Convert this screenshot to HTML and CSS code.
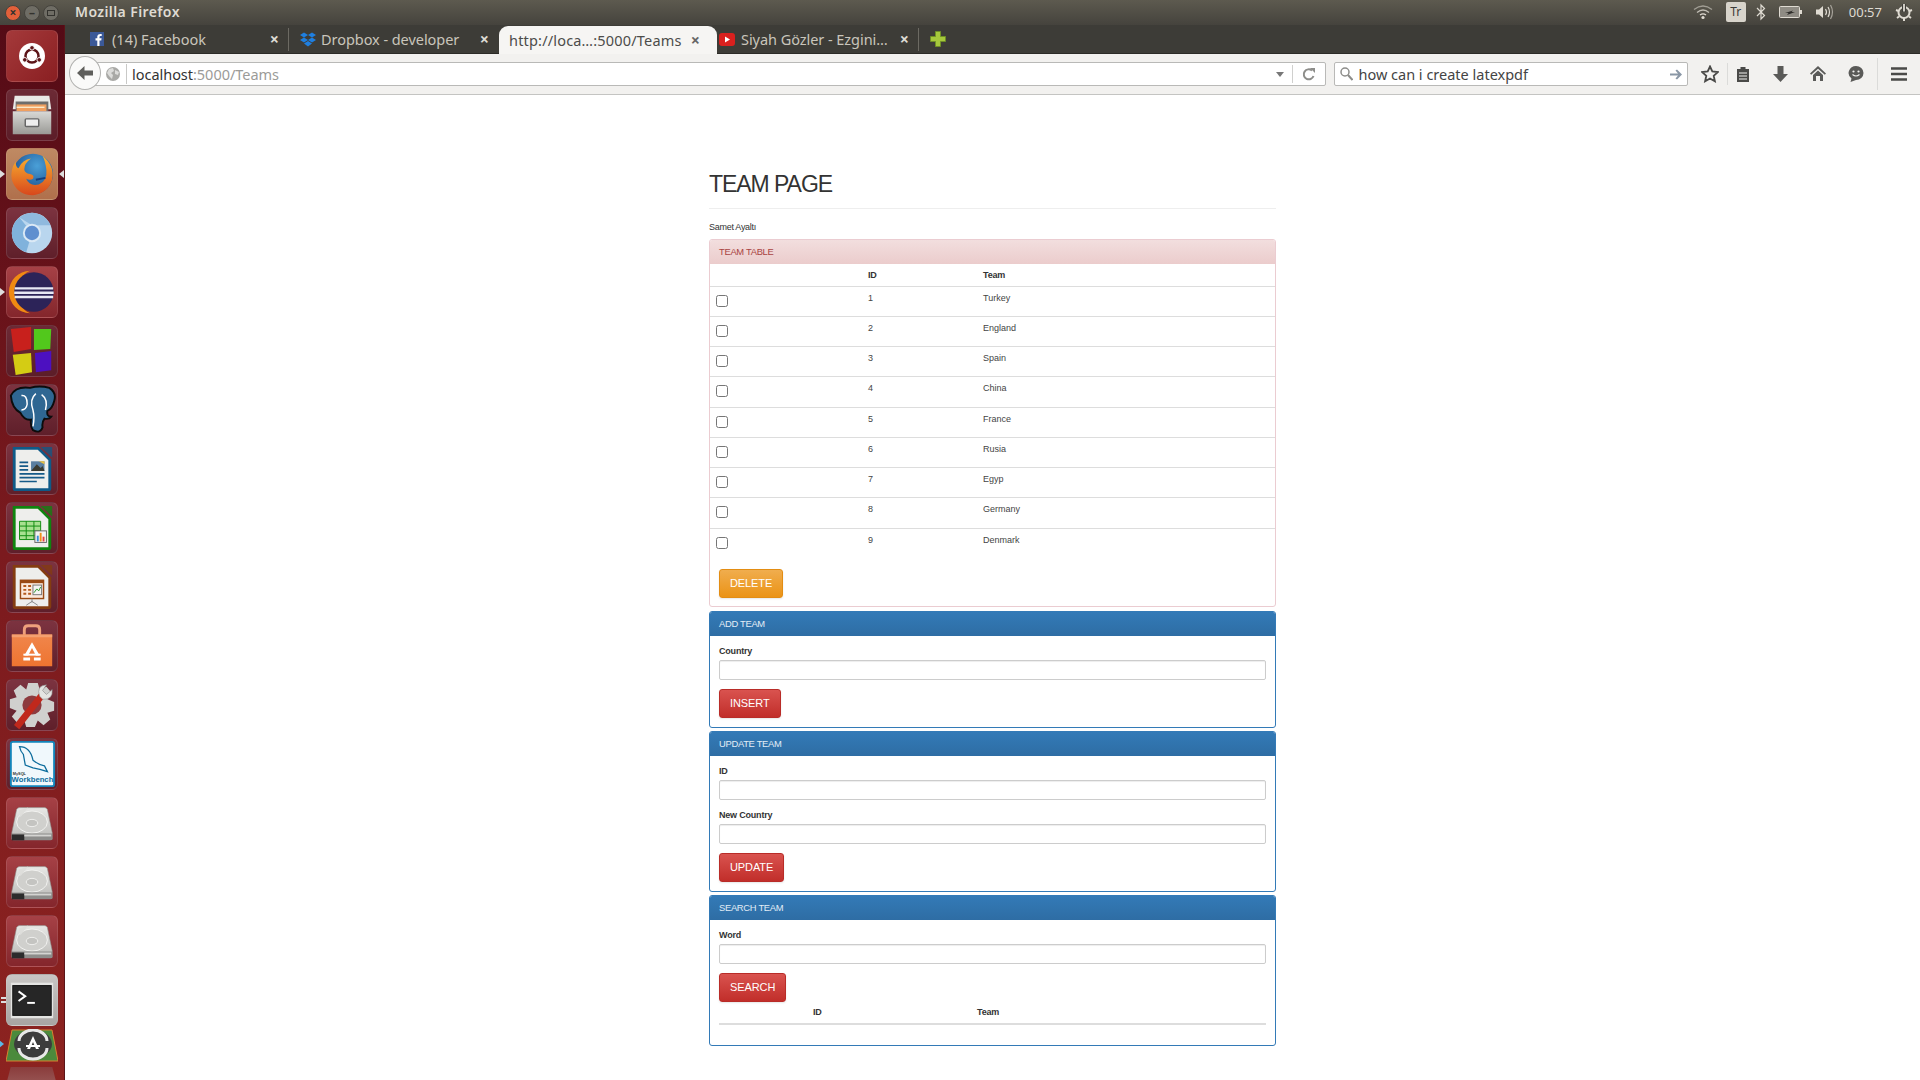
FILE: index.html
```html
<!DOCTYPE html>
<html lang="en">
<head>
<meta charset="utf-8">
<title>Team Page</title>
<link rel="stylesheet" href="styles.css">
</head>
<body>
<svg class="defs" width="0" height="0" aria-hidden="true">
  <defs>
    <linearGradient id="hddTop" x1="0" y1="0" x2="0" y2="1"><stop offset="0" stop-color="#e8e8e6"/><stop offset="1" stop-color="#bcbcb9"/></linearGradient>
    <linearGradient id="cabFront" x1="0" y1="0" x2="0" y2="1"><stop offset="0" stop-color="#d9d9d6"/><stop offset="1" stop-color="#9a9a96"/></linearGradient>
    <linearGradient id="bagG" x1="0" y1="0" x2="0" y2="1"><stop offset="0" stop-color="#f0864c"/><stop offset="1" stop-color="#ee7430"/></linearGradient>
    <radialGradient id="ffBlue" cx=".6" cy=".3" r=".8"><stop offset="0" stop-color="#4aa0d8"/><stop offset="1" stop-color="#123f80"/></radialGradient>
    <linearGradient id="ffOr" x1="0" y1="0" x2="0" y2="1"><stop offset="0" stop-color="#f8b030"/><stop offset="1" stop-color="#d8481c"/></linearGradient>
    <symbol id="hdd" viewBox="0 0 52 52">
      <path d="M13 10H39Q41 10 42 12L47 36V43H5V36L10 12Q11 10 13 10Z" fill="url(#hddTop)" stroke="#8c8c88" stroke-width=".6"/>
      <ellipse cx="26" cy="25" rx="16" ry="11.500" fill="#d0d0cd" stroke="#f2f2f0" stroke-width="1"/>
      <ellipse cx="26" cy="26" rx="6" ry="3.800" fill="#c4c4c1" stroke="#efefed" stroke-width="1"/>
      <path d="M12 13L22 10L14 20Z" fill="#dededb"/>
      <path d="M5 37H47V43Q47 44 45 44H7Q5 44 5 43Z" fill="#8d8d8b"/>
      <path d="M5 38H18V44H5Z" fill="#2c2c2c"/>
      <path d="M18 38H46V40H18Z" fill="#d4d4d1"/>
    </symbol>
    <symbol id="lodoc" viewBox="0 0 52 52">
      <path d="M6 3H33L46 16V46Q46 49 43 49H9Q6 49 6 46Z" fill="currentColor"/>
      <path d="M9 6H32L43 17V46H9Z" fill="#eeeeec"/>
      <path d="M35 3L46 3Q47 3 47 4V14Z" fill="currentColor" opacity=".75"/>
    </symbol>
  </defs>
</svg>

<div class="screen">
  <header class="top-panel">
    <div class="win-btns">
      <span class="win-btn win-close">×</span>
      <span class="win-btn">–</span>
      <span class="win-btn"><i class="win-max"></i></span>
    </div>
    <span class="win-title">Mozilla Firefox</span>
    <div class="indicators">
      <svg class="ind-wifi" width="20" height="16" viewBox="0 0 20 16"><g fill="none" stroke="#dfdbd2" stroke-width="1.300"><path d="M1 5.500Q10 -1.500 19 5.500" opacity=".55"/><path d="M4 8.500Q10 3.500 16 8.500" opacity=".8"/><path d="M7 11Q10 8.600 13 11"/></g><circle cx="10" cy="13.500" r="1.600" fill="#dfdbd2"/></svg>
      <span class="ind-tr">Tr</span>
      <svg class="ind-bt" width="10" height="18" viewBox="0 0 10 18"><path d="M1 5L8.500 12.500L5 16V2L8.500 5.500L1 13" fill="none" stroke="#dfdbd2" stroke-width="1.200"/></svg>
      <svg class="ind-bat" width="24" height="14" viewBox="0 0 24 14"><rect x=".5" y="1.500" width="20" height="11" rx="1" fill="#8f8c84" stroke="#dfdbd2"/><rect x="21" y="5" width="2" height="4" fill="#dfdbd2"/><path d="M6 8L14 5.500L12.500 7H16L8 10L9.500 8Z" fill="#2e2d2a"/></svg>
      <svg class="ind-vol" width="20" height="18" viewBox="0 0 20 18"><path d="M1 6.500H4L8 3V15L4 11.500H1Z" fill="#dfdbd2"/><g fill="none" stroke="#dfdbd2" stroke-width="1.200"><path d="M10.500 6Q12.500 9 10.500 12"/><path d="M13 4Q16 9 13 14"/><path d="M15.500 2Q19.500 9 15.500 16" opacity=".6"/></g></svg>
      <span class="ind-time">00:57</span>
      <svg class="ind-gear" width="18" height="18" viewBox="0 0 18 18"><circle cx="9" cy="9.500" r="5.500" fill="none" stroke="#dfdbd2" stroke-width="2"/><path d="M9 1V9" stroke="#3f3e39" stroke-width="4"/><path d="M9 1V8.500" stroke="#dfdbd2" stroke-width="1.800"/><path d="M9 15V18M2 15L4 13.500M16 15L14 13.500M1 7L3.500 8M17 7L14.500 8" stroke="#dfdbd2" stroke-width="2"/></svg>
    </div>
  </header>

  <div class="desktop">
    <nav class="launcher">
      <div class="tile t-dash"><svg viewBox="0 0 52 52"><circle cx="26" cy="26" r="13.500" fill="#fff"/><circle cx="26" cy="26" r="6.800" fill="none" stroke="#5c1418" stroke-width="2.600"/><circle cx="26" cy="17.500" r="2.400" fill="#5c1418" stroke="#fff"/><circle cx="18.500" cy="30" r="2.400" fill="#5c1418" stroke="#fff"/><circle cx="33.500" cy="30" r="2.400" fill="#5c1418" stroke="#fff"/></svg></div>
      <div class="tile t-plain"><svg viewBox="0 0 52 52"><path d="M8 6H44L46 20H6Z" fill="#e9e9e6"/><path d="M9 12H43V22H9Z" fill="#6e6e6c"/><path d="M10 15H41V22H10Z" fill="#f0a060"/><path d="M10 18H39" stroke="#fbe9c8" stroke-width="1.500"/><path d="M6 22H46V46H6Z" fill="url(#cabFront)"/><rect x="19" y="30" width="14" height="8" rx="1" fill="#eee" stroke="#666" stroke-width="1.500"/></svg></div>
      <div class="tile t-tan pipped-both"><svg viewBox="0 0 52 52"><circle cx="27" cy="26" r="21" fill="url(#ffBlue)"/><path d="M37 7Q50 18 47 32Q43 46 27 48Q10 48 5 32Q3 22 9 13Q9 19 12 20Q16 11 25 10Q18 15 18 21Q18 25 24 26Q29 27 27 31Q24 33 20 31Q23 39 33 37Q42 33 41 22Q40 13 37 7Z" fill="url(#ffOr)"/><path d="M30 32L40 30" stroke="#143f80" stroke-width="2"/></svg></div>
      <div class="tile t-plum"><svg viewBox="0 0 52 52"><circle cx="26" cy="26" r="21" fill="#b9d6ee"/><path d="M26 5A21 21 0 0 1 45 18H26L13 10A21 21 0 0 1 26 5Z" fill="#8fb9de"/><path d="M5 26A21 21 0 0 1 13 10L26 26L20 46A21 21 0 0 1 5 26Z" fill="#80b2dc"/><circle cx="26" cy="26" r="9.500" fill="#dbe9f5"/><circle cx="26" cy="26" r="7.500" fill="#5f8fcf"/></svg></div>
      <div class="tile t-rose pipped-left"><svg viewBox="0 0 52 52"><path d="M24 4A22 22 0 1 0 24 48A24 24 0 0 1 24 4Z" fill="#f08a12"/><circle cx="28" cy="26" r="20.500" fill="#2c2358"/><path d="M8 21H48V23.500H8ZM7.500 25.500H48.500V28H7.500ZM8 30H48V32.500H8Z" fill="#e8e8f4"/></svg></div>
      <div class="tile t-plain"><svg viewBox="0 0 52 52"><path d="M4 3L25 1V24L7 27Z" fill="#c8201c"/><path d="M28 3L46 3L45 24L28 25Z" fill="#52c81c"/><path d="M6 30L25 28L26 48L9 51Z" fill="#d4cc14"/><path d="M29 28L46 26V46L30 48Z" fill="#4c10c0"/></svg></div>
      <div class="tile t-plum"><svg viewBox="0 0 52 52"><path d="M4 11Q9 1 24 3Q34 0 44 3Q52 8 49 17Q47 25 42 27Q41 33 46 33Q44 36 39 35Q36 39 37 44Q35 51 27 47Q24 43 25 36Q18 37 14 29Q5 24 4 11Z" fill="#2f6792" stroke="#0c0c0c" stroke-width="2"/><path d="M15 11Q21 10 21 20Q20 26 15 26M30 9Q23 15 27 26Q29 34 27 43M36 10Q43 15 40 26" fill="none" stroke="#fff" stroke-width="1.500"/></svg></div>
      <div class="tile t-plum"><svg viewBox="0 0 52 52" class="lo-writer"><use href="#lodoc"/><path d="M13 19H22M13 23H22M13 27H22M13 31H39M13 35H39M13 39H31" stroke="#155a88" stroke-width="1.800"/><rect x="25" y="18" width="14" height="10" fill="#5a7ea0"/><path d="M25 28L31 21L35 25L37 23L39 28Z" fill="#3a3a30"/><path d="M33 18H39V21Z" fill="#e8c040"/></svg></div>
      <div class="tile t-plum"><svg viewBox="0 0 52 52" class="lo-calc"><use href="#lodoc"/><path d="M13 19H35V38H13Z" fill="#a8e090" stroke="#0f8a0f"/><path d="M13 24H35M13 29H35M13 34H35M20 19V38M28 19V38" stroke="#0f8a0f" stroke-width="1"/><rect x="29" y="29" width="12" height="12" fill="#f4f4f2" stroke="#666"/><path d="M31 40V34H33V40Z" fill="#3a90d8"/><path d="M34 40V31H36V40Z" fill="#f0901c"/><path d="M37 40V35H39V40Z" fill="#e84040"/></svg></div>
      <div class="tile t-plum"><svg viewBox="0 0 52 52" class="lo-impress"><use href="#lodoc"/><rect x="14" y="19" width="24" height="19" fill="#fbe9dc" stroke="#9a4a14" stroke-width="1.500"/><path d="M14 19H38V22H14Z" fill="#9a4a14"/><path d="M17 25H20M22 25H25M17 29H20M22 29H25M17 33H20M22 33H25" stroke="#b45a1c" stroke-width="2"/><rect x="27" y="24" width="9" height="10" fill="#f4f4f2" stroke="#777"/><path d="M28 32L31 28L33 30L35 26" stroke="#2a9a2a" fill="none"/><path d="M26 38V42M26 41L20 45M26 41L32 45" stroke="#888" stroke-width="1"/></svg></div>
      <div class="tile t-plum"><svg viewBox="0 0 52 52"><path d="M18 16V9Q18 5 22 5H30Q34 5 34 9V16" fill="none" stroke="#eea07c" stroke-width="3"/><path d="M5 14H47V47H5Z" fill="url(#bagG)"/><path d="M5 14H47V17H5Z" fill="#f4a070"/><path d="M26 22L18 36H22L26 28L30 36H34Z" fill="#fff"/><path d="M17 34H35V36H17Z" fill="#fff"/><path d="M17 38H24V41H17ZM28 38H35V41H28Z" fill="#fff"/></svg></div>
      <div class="tile t-plum"><svg viewBox="0 0 52 52"><path d="M22 3H32L34 10L41 7L47 14L42 20L49 23V32L42 34L45 41L38 47L32 42L29 49H20L18 42L11 45L5 38L10 32L3 29V20L10 18L7 11L14 5L20 10Z" fill="#d0d0ce"/><circle cx="26" cy="26" r="10" fill="#8d3a3e"/><path d="M10 49L37 15" stroke="#c0281c" stroke-width="7"/><path d="M34 17Q30 6 41 5L37 11L41 15L47 10Q48 21 37 20Z" fill="#e4e4e2" stroke="#888" stroke-width=".6"/></svg></div>
      <div class="tile t-plum"><svg viewBox="0 0 52 52"><rect x="4" y="3" width="45" height="46" rx="2" fill="#f0f8fc" stroke="#1284ba" stroke-width="2"/><path d="M13 8Q24 8 27 22Q33 27 39 28L42 34Q34 31 27 30L19 27L17 16Q14 13 13 8Z" fill="none" stroke="#0c6c9c" stroke-width="1.300"/><text x="6" y="37" class="wb-small">MySQL</text><text x="26.500" y="45" class="wb-big" text-anchor="middle">Workbench</text></svg></div>
      <div class="tile t-rose"><svg viewBox="0 0 52 52"><use href="#hdd"/></svg></div>
      <div class="tile t-rose"><svg viewBox="0 0 52 52"><use href="#hdd"/></svg></div>
      <div class="tile t-rose"><svg viewBox="0 0 52 52"><use href="#hdd"/></svg></div>
      <div class="tile t-term pipped-double"><svg viewBox="0 0 52 52"><rect x="4" y="8" width="44" height="37" fill="#e4e4e2"/><rect x="6" y="11" width="40" height="31" fill="#262626" stroke="#111"/><path d="M12 17L19 22L12 27" fill="none" stroke="#fff" stroke-width="2"/><path d="M21 29H29" stroke="#fff" stroke-width="2"/></svg></div>
      <div class="tile-updater pipped-blue"><svg viewBox="0 0 52 34"><path d="M6 1H46L52 32H0Z" fill="#4b8a3c" stroke="#d88030" stroke-width="1"/><ellipse cx="27" cy="15" rx="19" ry="14" fill="#3c3c3c"/><path d="M13 12A14 11 0 0 1 41 12M41 19A14 11 0 0 1 13 19" fill="none" stroke="#e8e8e8" stroke-width="3"/><path d="M27 7L21 20H24L27 13L30 20H33Z" fill="#fff"/><path d="M20 16H34V18H20Z" fill="#fff"/></svg></div>
      <div class="tile-ghost"></div>
    </nav>

    <div class="browser">
      <div class="tabstrip">
        <div class="tab tab-fb">
          <svg class="fav" width="14" height="14" viewBox="0 0 14 14"><rect width="14" height="14" fill="#3b5998"/><path d="M9.500 14V8.500H11.300L11.600 6.300H9.500V5Q9.500 4 10.500 4H11.700V2.100Q8 1.500 7.300 4V6.300H5.500V8.500H7.300V14Z" fill="#fff"/></svg>
          <span class="tab-label">(14) Facebook</span>
          <span class="tab-close">×</span>
        </div>
        <div class="tab tab-db">
          <svg class="fav" width="16" height="15" viewBox="0 0 16 15"><path d="M4 .5L8 3L4 5.500L0 3ZM12 .5L16 3L12 5.500L8 3ZM4 5.500L8 8L4 10.500L0 8ZM12 5.500L16 8L12 10.500L8 8ZM8 9L12 11.500L8 14.500L4 11.500Z" fill="#1f7fe0"/></svg>
          <span class="tab-label">Dropbox - developer</span>
          <span class="tab-close">×</span>
        </div>
        <div class="tab tab-active">
          <span class="tab-label">http://loca…:5000/Teams</span>
          <span class="tab-close">×</span>
        </div>
        <div class="tab tab-yt">
          <svg class="fav" width="16" height="13" viewBox="0 0 16 13"><rect width="16" height="13" rx="3" fill="#d9201e"/><path d="M6 3.500L11 6.500L6 9.500Z" fill="#fff"/></svg>
          <span class="tab-label">Siyah Gözler - Ezgini…</span>
          <span class="tab-close">×</span>
        </div>
        <svg class="new-tab" width="16" height="16" viewBox="0 0 16 16"><path d="M5.500 .5H10.500V5.500H15.500V10.500H10.500V15.500H5.500V10.500H.5V5.500H5.500Z" fill="#a6c83c" stroke="#6f8f26"/></svg>
      </div>

      <div class="navbar">
        <div class="back-wrap">
          <svg width="16" height="14" viewBox="0 0 16 14"><path d="M7.500 0L0 7L7.500 14V9.500H16V4.500H7.500Z" fill="#5f5f5c"/></svg>
        </div>
        <div class="urlbar">
          <svg class="globe" width="14" height="14" viewBox="0 0 14 14"><circle cx="7" cy="7" r="7" fill="#a9a9a6"/><path d="M3 2L7 1L8 4L5 6L7 8L6 12L3 9L1 6ZM9 3L13 5L12 8L9 7Z" fill="#dcdcda"/></svg>
          <span class="url-text"><span class="url-host">localhost</span>:5000/Teams</span>
          <span class="dropmark"></span>
          <svg class="reload" width="14" height="14" viewBox="0 0 14 14"><path d="M11.500 9A5 5 0 1 1 10 3.500" fill="none" stroke="#8d8d8a" stroke-width="2"/><path d="M8 1L13 1V6Z" fill="#8d8d8a"/></svg>
        </div>
        <div class="searchbar">
          <svg width="13" height="14" viewBox="0 0 13 14"><circle cx="5" cy="5" r="4" fill="none" stroke="#8d8d8a" stroke-width="1.500"/><path d="M8 8L12.500 13" stroke="#8d8d8a" stroke-width="2"/></svg>
          <span class="search-text">how can i create latexpdf</span>
          <svg class="go" width="12" height="11" viewBox="0 0 12 11"><path d="M0 4.500H8L5.500 1.500L7 .5L12 5.500L7 10.500L5.500 9.500L8 6.500H0Z" fill="#8a97a6"/></svg>
        </div>
        <div class="tools">
          <svg width="18" height="18" viewBox="0 0 18 18"><path d="M9 1.500L11.300 6.500L16.800 7.100L12.700 10.800L13.900 16.300L9 13.500L4.100 16.300L5.300 10.800L1.200 7.100L6.700 6.500Z" fill="none" stroke="#4a4a48" stroke-width="1.800"/></svg>
          <i class="tool-sep"></i>
          <svg width="14" height="17" viewBox="0 0 14 17"><path d="M1 3H13V16H1Z" fill="#4a4a48"/><rect x="4.500" y="1" width="5" height="4" fill="#4a4a48"/><path d="M3 7H11M3 10H11M3 13H11" stroke="#f2f1ef" stroke-width="1.200"/></svg>
          <svg class="tool-dl" width="15" height="17" viewBox="0 0 15 17"><path d="M4.500 0H10.500V8H15L7.500 16L0 8H4.500Z" fill="#5a5a58"/></svg>
          <svg class="tool-home" width="16" height="16" viewBox="0 0 16 16"><path d="M8 0L16 7.500L14.800 8.800L8 2.800L1.200 8.800L0 7.500Z" fill="#5a5a58"/><path d="M8 4.500L13 9V15H10V10H6V15H3V9Z" fill="#5a5a58"/></svg>
          <svg class="tool-hello" width="16" height="16" viewBox="0 0 16 16"><path d="M8 0A7.500 7 0 0 1 8 14L2.500 16L3.500 12.500A7.500 7 0 0 1 8 0Z" fill="#5a5a58"/><circle cx="5.500" cy="5.500" r="1.100" fill="#f2f1ef"/><circle cx="10.500" cy="5.500" r="1.100" fill="#f2f1ef"/><path d="M4.500 8.500Q8 11.500 11.500 8.500" fill="none" stroke="#f2f1ef" stroke-width="1.200"/></svg>
          <i class="tool-sep tool-sep-b"></i>
          <svg class="tool-menu" width="16" height="14" viewBox="0 0 16 14"><path d="M0 1.500H16M0 7H16M0 12.500H16" stroke="#4a4a48" stroke-width="2.600"/></svg>
        </div>
      </div>

      <main class="page">
        <div class="container">
          <div class="page-header"><h1>TEAM PAGE</h1></div>
          <p class="author">Samet Ayaltı</p>

          <section class="panel panel-danger">
            <div class="panel-heading">TEAM TABLE</div>
            <table class="table table-teams">
              <thead><tr><th></th><th>ID</th><th>Team</th></tr></thead>
              <tbody>
                <tr><td><input type="checkbox"></td><td>1</td><td>Turkey</td></tr>
                <tr><td><input type="checkbox"></td><td>2</td><td>England</td></tr>
                <tr><td><input type="checkbox"></td><td>3</td><td>Spain</td></tr>
                <tr><td><input type="checkbox"></td><td>4</td><td>China</td></tr>
                <tr><td><input type="checkbox"></td><td>5</td><td>France</td></tr>
                <tr><td><input type="checkbox"></td><td>6</td><td>Rusia</td></tr>
                <tr><td><input type="checkbox"></td><td>7</td><td>Egyp</td></tr>
                <tr><td><input type="checkbox"></td><td>8</td><td>Germany</td></tr>
                <tr><td><input type="checkbox"></td><td>9</td><td>Denmark</td></tr>
              </tbody>
            </table>
            <div class="delete-row"><button class="btn btn-warning">DELETE</button></div>
          </section>

          <section class="panel panel-primary panel-add">
            <div class="panel-heading">ADD TEAM</div>
            <div class="panel-body">
              <label class="field-label">Country</label>
              <input class="form-control" type="text">
              <button class="btn btn-danger">INSERT</button>
            </div>
          </section>

          <section class="panel panel-primary panel-update">
            <div class="panel-heading">UPDATE TEAM</div>
            <div class="panel-body">
              <label class="field-label">ID</label>
              <input class="form-control form-gap" type="text">
              <label class="field-label">New Country</label>
              <input class="form-control" type="text">
              <button class="btn btn-danger">UPDATE</button>
            </div>
          </section>

          <section class="panel panel-primary panel-search">
            <div class="panel-heading">SEARCH TEAM</div>
            <div class="panel-body">
              <label class="field-label">Word</label>
              <input class="form-control" type="text">
              <button class="btn btn-danger">SEARCH</button>
              <table class="table table-results">
                <thead><tr><th></th><th>ID</th><th>Team</th></tr></thead>
              </table>
            </div>
          </section>
        </div>
      </main>
    </div>
  </div>
</div>
</body>
</html>
```

FILE: styles.css
```css
* { box-sizing: border-box; }
html, body { margin: 0; padding: 0; height: 100%; overflow: hidden; background: #fff; }
body { font-family: "Liberation Sans", Arial, sans-serif; color: #333; }
.defs { position: absolute; }
.screen { width: 1920px; height: 1080px; display: flex; flex-direction: column; overflow: hidden; }

/* Top panel */
.top-panel { height: 25px; flex: none; display: flex; align-items: center; background: linear-gradient(#5d5a4f, #45433d); font-family: "Noto Sans", sans-serif; color: #dfdbd2; }
.win-btns { display: flex; gap: 3px; margin-left: 5px; width: 70px; }
.win-btn { width: 16px; height: 16px; border-radius: 50%; background: #6f6d65; color: #33322e; font-size: 12px; line-height: 14px; text-align: center; display: flex; align-items: center; justify-content: center; font-weight: 700; border: 1px solid #45433d; }
.win-close { background: #e2603a; }
.win-max { display: block; width: 8px; height: 6px; border: 1.500px solid #33322e; }
.win-title { font-size: 14px; font-weight: 600; letter-spacing: .4px; margin-top: -2px; }
.indicators { margin-left: auto; display: flex; align-items: center; height: 25px; margin-top: -1px; }
.ind-wifi { margin-right: 13px; }
.ind-tr { width: 20px; height: 20px; background: #d8d4cb; color: #3c3b37; font-size: 12px; border-radius: 2px; text-align: center; line-height: 20px; margin-right: 10px; }
.ind-bt { margin-right: 13px; }
.ind-bat { margin-right: 12px; }
.ind-vol { margin-right: 14px; }
.ind-time { font-size: 13px; margin-right: 13px; }
.ind-gear { margin-right: 7px; }

.desktop { flex: 1; display: flex; min-height: 0; }

/* Launcher */
.launcher { width: 65px; flex: none; display: flex; flex-direction: column; align-items: center; gap: 7px; padding: 5px 1px 0 0; background: linear-gradient(#540b16, #7b1a1e 50%, #8c2320); overflow: hidden; border-right: 1px solid #5a1418; }
.tile { width: 52px; height: 52px; flex: none; border-radius: 6px; position: relative; border: 1px solid rgba(255,255,255,.1); }
.tile svg { display: block; width: 100%; height: 100%; }
.t-dash { background: linear-gradient(135deg, #a4393a, #8a1f22); }
.t-plain { background: linear-gradient(#6c2a35, #5c1d28); }
.t-tan { background: linear-gradient(#bf8a63, #b0704c); }
.t-plum { background: linear-gradient(#7c3340, #5f1f2a); }
.t-rose { background: linear-gradient(#a64146, #84262c); }
.t-term { background: linear-gradient(#c8c6c4, #a8a4a2); }
.tile-updater { width: 52px; height: 34px; flex: none; margin-top: -4px; position: relative; }
.tile-updater svg { display: block; width: 100%; height: 100%; }
.tile-ghost { width: 52px; height: 20px; flex: none; margin-top: -3px; background: linear-gradient(#8a3c3c, #9a5a58); clip-path: polygon(10% 0, 90% 0, 100% 100%, 0 100%); }
.pipped-both::before, .pipped-left::before, .pipped-double::before, .pipped-blue::before { content: ""; position: absolute; left: -7px; top: 50%; margin-top: -4px; border-left: 5px solid #ddd; border-top: 4px solid transparent; border-bottom: 4px solid transparent; }
.pipped-both::after { content: ""; position: absolute; right: -7px; top: 50%; margin-top: -4px; border-right: 5px solid #ddd; border-top: 4px solid transparent; border-bottom: 4px solid transparent; }
.pipped-blue::before { border-left-color: #5bb8e8; margin-top: -6px; }
.pipped-double::before { border: 0; width: 5px; height: 6px; margin-top: -3px; left: -6px; background: linear-gradient(#ddd 2px, transparent 2px, transparent 4px, #ddd 4px); }
.lo-writer { color: #0f5a88; }
.lo-calc { color: #0f840f; }
.lo-impress { color: #843c10; }
.wb-small { font: 700 4px "Liberation Sans", sans-serif; fill: #333; }
.wb-big { font: 700 8px "Liberation Sans", sans-serif; fill: #0c6c9c; }

/* Browser */
.browser { flex: 1; min-width: 0; display: flex; flex-direction: column; }
.tabstrip { height: 29px; flex: none; display: flex; align-items: center; background: #3d3c37; border-bottom: 1px solid #2c2b27; font-family: "Noto Sans", sans-serif; font-size: 14.500px; color: #c9c5bb; }
.tab { height: 28px; display: flex; align-items: center; position: relative; flex: none; }
.tab-label { white-space: nowrap; }
.tab-close { position: absolute; top: 4px; font-size: 16px; font-weight: 700; line-height: 20px; color: #dedbd4; }
.tab-fb { width: 224px; padding-left: 25px; border-right: 1px solid #6c6a63; height: 23px; }
.tab-fb .tab-label { margin-left: 8px; }
.tab-fb .tab-close { right: 9px; top: 1px; }
.tab-db { width: 210px; padding-left: 11px; border-right: 0; height: 23px; }
.tab-db .tab-label { margin-left: 5px; letter-spacing: -.05px; }
.tab-db .tab-close { right: 10px; top: 1px; }
.tab-active { width: 218px; height: 28px; align-self: flex-end; padding-left: 10px; margin-bottom: -1px; background: #f6f5f3; color: #4c4c4a; border-radius: 9px 9px 0 0; }
.tab-active .tab-label { letter-spacing: .18px; }
.tab-active .tab-close { right: 17px; color: #666; }
.tab-yt { width: 202px; margin-left: 0; padding-left: 2px; border-right: 1px solid #6c6a63; height: 23px; }
.tab-yt .tab-label { margin-left: 6px; letter-spacing: -.05px; }
.tab-yt .tab-close { right: 9px; top: 1px; }
.new-tab { margin-left: 11px; flex: none; }

.navbar { height: 41px; flex: none; display: flex; align-items: center; background: #f2f1ef; border-bottom: 1px solid #c4c4c2; padding-right: 13px; position: relative; font-family: "Noto Sans", sans-serif; }
.back-wrap { position: absolute; left: 4px; top: 2px; width: 32px; height: 34px; border-radius: 50%; background: #fafaf9; border: 1px solid #b2b2b0; display: flex; align-items: center; justify-content: center; z-index: 1; }
.urlbar { margin-left: 20px; width: 1243px; height: 24px; background: #fff; border: 1px solid #b9b9b7; border-radius: 2px; display: flex; align-items: center; padding-left: 20px; position: relative; }
.globe { flex: none; margin-right: 6px; }
.url-text { font-size: 14.500px; color: #9b9b98; padding-left: 5px; border-left: 1px solid #c9c9c7; line-height: 20px; letter-spacing: -.03px; }
.url-host { color: #333; }
.dropmark { margin-left: auto; margin-right: 41px; border-top: 5px solid #777; border-left: 4px solid transparent; border-right: 4px solid transparent; }
.reload { position: absolute; right: 9px; top: 4px; }
.urlbar::after { content: ""; position: absolute; right: 32px; top: 2px; height: 18px; border-left: 1px solid #d0d0ce; }
.searchbar { margin-left: 8px; width: 354px; height: 24px; background: #fff; border: 1px solid #b9b9b7; border-radius: 2px; display: flex; align-items: center; padding: 0 5px; }
.search-text { font-size: 14.500px; color: #444; margin-left: 5px; }
.go { margin-left: auto; }
.tools { display: flex; align-items: center; margin-left: 13px; flex: none; }
.tool-sep { width: 1px; height: 22px; background: #dbdbd9; margin: 0 8px 0 8px; }
.tool-dl { margin-left: 23px; }
.tool-home { margin-left: 22px; }
.tool-hello { margin-left: 22px; }
.tool-sep-b { margin: 0 13px 0 13px; height: 32px; }

/* Page */
.page { flex: 1; min-height: 0; overflow: hidden; background: #fff; }
.container { width: 567px; margin: 0 auto; font-size: 9.400px; line-height: 13px; }
.page-header { padding-top: 75px; height: 114px; border-bottom: 1px solid #eee; }
.page-header h1 { margin: 0; font-size: 23px; line-height: 28px; font-weight: 400; letter-spacing: -1.050px; color: #333; }
.author { margin: 0; height: 30px; padding-top: 12px; font-size: 9px; letter-spacing: -.28px; }
.panel { border: 1px solid; border-radius: 3px; background: #fff; overflow: hidden; }
.panel-heading { height: 24px; padding-left: 9px; line-height: 23px; font-size: 9.400px; letter-spacing: -.3px; }
.panel-danger { border-color: #ebccd1; height: 368px; margin-bottom: 4px; }
.panel-danger .panel-heading { background: linear-gradient(#f2dede, #ebcccc); color: #a94442; }
.panel-primary { border-color: #337ab7; }
.panel-primary .panel-heading { background: linear-gradient(#337ab7, #2e6da4); color: #e3edf6; }
.panel-add { height: 117px; margin-bottom: 3px; }
.panel-update { height: 161px; margin-bottom: 3px; }
.panel-search { height: 151px; }
.panel-body { padding: 10px 9px 0; }

.table { width: 100%; border-collapse: collapse; table-layout: fixed; }
.table th { text-align: left; font-weight: 700; padding: 0 6px; font-size: 9px; letter-spacing: -.2px; color: #333; vertical-align: bottom; }
.table td { padding: 6px 6px 5px; vertical-align: top; font-size: 9px; line-height: 10px; border-top: 1px solid #ddd; color: #444; }
.table input[type=checkbox] { display: block; width: 12px; height: 12px; margin: 2px 0 0; }
.table-teams thead tr { height: 22px; }
.table-teams th { padding-bottom: 4px; border-bottom: 1px solid #ddd; }
.table-teams tbody tr { height: 30.250px; }
.table-teams th:first-child { width: 152px; }
.table-teams th:nth-child(2) { width: 115px; }
.table-results { margin-top: 4px; }
.table-results thead tr { height: 18px; }
.table-results th { border-bottom: 2px solid #ddd; padding-bottom: 4px; }
.table-results th:first-child { width: 88px; }
.table-results th:nth-child(2) { width: 164px; }
.delete-row { padding: 11px 0 0 9px; }

.field-label { display: block; height: 10px; line-height: 10px; margin-bottom: 4px; font-size: 9px; font-weight: 700; letter-spacing: -.2px; color: #333; }
.form-control { display: block; width: 100%; height: 20px; padding: 0 6px; border: 1px solid #ccc; border-radius: 2px; background: #fff; box-shadow: inset 0 1px 1px rgba(0,0,0,.075); outline: 0; }
.form-gap { margin-bottom: 10px; }
.btn { display: block; height: 29px; margin: 0; padding: 0 10px 2px; border: 1px solid; border-radius: 3px; font-family: "Liberation Sans", sans-serif; font-size: 11px; color: #fff; letter-spacing: -.1px; box-shadow: 0 1px 2px rgba(0,0,0,.1); }
.form-control + .btn { margin-top: 9px; }
.btn-warning { background: linear-gradient(#f0ad4e, #eb9316); border-color: #e38d13; }
.btn-danger { background: linear-gradient(#d9534f, #c12e2a); border-color: #b92c28; }
```
